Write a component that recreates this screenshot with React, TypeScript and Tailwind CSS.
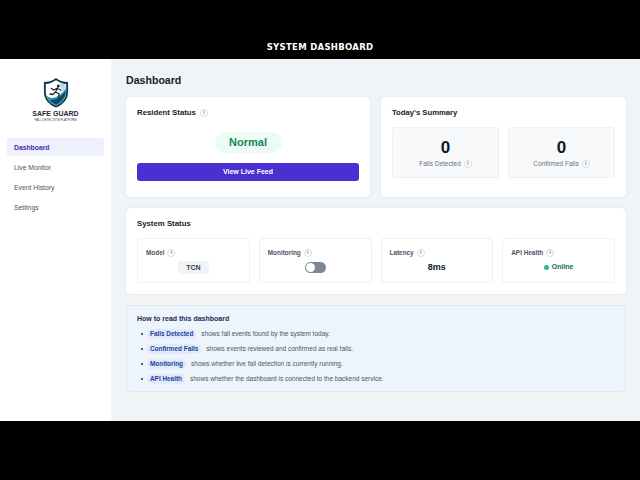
import React from 'react';

const font = "font-['Liberation_Sans',Arial,sans-serif]";

const Info = () => (
  <span className="inline-flex h-[8px] w-[8px] shrink-0 items-center justify-center rounded-full border border-[#d5dbe3] bg-white text-[5px] font-bold leading-none text-[#6b7280]">
    i
  </span>
);

const Logo = () => (
  <svg width="26" height="31" viewBox="0 0 28 31" preserveAspectRatio="none" className="block">
    <path d="M14 1 C18 4 23 5 27 5 L27 15 C27 23 21 28 14 30.5 C7 28 1 23 1 15 L1 5 C5 5 10 4 14 1 Z" fill="#12384f" />
    <path d="M14 3.2 C18 5.6 21.5 6.8 25 7 L25 15 C25 22 20 26.4 14 28.4 C8 26.4 3 22 3 15 L3 7 C6.5 6.8 10 5.6 14 3.2 Z" fill="#ffffff" />
    <path d="M3.4 18 C8 23 17 22 25 11 L25 15 C25 22 20 26.4 14 28.4 C9 26.8 5 23 3.4 18 Z" fill="#2a8fae" />
    <path d="M7 23 C12 24 19 21 24 14 L23.4 18.5 C21 23.5 17.5 26 14 27.2 C11 26.2 9 25 7 23 Z" fill="#0f4560" />
    <path d="M18 6.5 L24.5 7.5 L24.5 12 L20 15 Z" fill="#b7dbe7" />
    <circle cx="16.5" cy="9" r="1.5" fill="#10202e" />
    <path d="M15.5 11 L11.5 13 L9 11.5 M15.5 11 L13.5 15 L17.5 17 L16.5 20 M13.5 15 L10.5 17.5 L7.5 17 M15.5 11.5 L19 13" fill="none" stroke="#10202e" strokeWidth="1.3" strokeLinecap="round" strokeLinejoin="round" />
  </svg>
);

const Sidebar = () => (
  <aside className="flex w-[111px] shrink-0 flex-col bg-white px-[7px] pt-[18px]">
    <div className="flex flex-col items-center">
      <Logo />
      <div className="mt-[2px] text-[7px] font-bold leading-[8px] text-[#1f2937]">SAFE GUARD</div>
      <div className="text-[3px] leading-[4px] text-[#374151]">FALL DETECTION PLATFORM</div>
    </div>
    <nav className="mt-[16px] flex flex-col gap-[2px] text-[6.8px] text-[#4b5563]">
      <div className="flex h-[18px] items-center rounded-[3px] bg-[#eef0fd] px-[7px] pt-[2px] font-bold text-[#3f2fa8]">Dashboard</div>
      <div className="flex h-[18px] items-center px-[7px] pt-[2px]">Live Monitor</div>
      <div className="flex h-[18px] items-center px-[7px] pt-[2px]">Event History</div>
      <div className="flex h-[18px] items-center px-[7px] pt-[2px]">Settings</div>
    </nav>
  </aside>
);

const StatusTile = ({ label, children }: { label: string; children: React.ReactNode }) => (
  <div className="h-[45px] flex-1 rounded-[3px] border border-[#eef1f4] bg-white px-[8px] pt-[9px]">
    <div className="flex items-center gap-[3px] text-[6.4px] font-bold leading-[9px] text-[#4b5563]">
      {label} <Info />
    </div>
    <div className="mt-[4px] flex h-[13px] items-center justify-center">{children}</div>
  </div>
);

const SummaryTile = ({ label }: { label: string }) => (
  <div className="flex h-[51px] flex-1 flex-col items-center rounded-[3px] border border-[#eef1f4] bg-[#f7f9fb] pt-[11px]">
    <div className="text-[17px] font-bold leading-[18px] text-[#111827]">0</div>
    <div className="mt-[2px] flex items-center gap-[3px] text-[6.5px] leading-[9px] text-[#6b7280]">
      {label} <Info />
    </div>
  </div>
);

const helpRows = [
  { term: 'Falls Detected', text: 'shows fall events found by the system today.' },
  { term: 'Confirmed Falls', text: 'shows events reviewed and confirmed as real falls.' },
  { term: 'Monitoring', text: 'shows whether live fall detection is currently running.' },
  { term: 'API Health', text: 'shows whether the dashboard is connected to the backend service.' },
];

const App = () => (
  <div className={`flex h-[480px] w-[640px] flex-col overflow-hidden bg-black ${font}`}>
    <header className="flex h-[59px] shrink-0 items-end justify-center pb-[6px]">
      <h1 className="font-['DejaVu_Sans',sans-serif] text-[8.5px] font-bold leading-[12px] tracking-[0.3px] text-white">SYSTEM DASHBOARD</h1>
    </header>

    <div className="flex h-[362px] shrink-0">
      <Sidebar />
      <main className="flex-1 bg-[#f1f4f6] pl-[15px] pr-[14px] pt-[14px]">
        <h2 className="text-[10.6px] font-bold leading-[14px] text-[#1a202c]">Dashboard</h2>

        <div className="mt-[10px] flex gap-[11px]">
          <section className="h-[100px] w-[244px] rounded-[4px] bg-white px-[11px] pt-[10px] shadow-[0_0_1px_rgba(0,0,0,0.25)]">
            <div className="flex items-center gap-[4px] text-[7.8px] font-bold leading-[11px] text-[#1a202c]">
              Resident Status <Info />
            </div>
            <div className="mt-[14px] flex justify-center">
              <span className="flex h-[21px] w-[67px] items-center justify-center rounded-full bg-[#ecfbf3] text-[11px] font-bold text-[#15875a]">Normal</span>
            </div>
            <button className="mt-[10px] flex h-[18px] w-full items-center justify-center rounded-[3px] bg-[#4a30d0] text-[7px] font-bold text-white">
              View Live Feed
            </button>
          </section>

          <section className="h-[100px] flex-1 rounded-[4px] bg-white px-[11px] pt-[10px] shadow-[0_0_1px_rgba(0,0,0,0.25)]">
            <div className="text-[7.7px] font-bold leading-[11px] text-[#1a202c]">Today's Summary</div>
            <div className="mt-[9px] flex gap-[9px]">
              <SummaryTile label="Falls Detected" />
              <SummaryTile label="Confirmed Falls" />
            </div>
          </section>
        </div>

        <section className="mt-[11px] h-[86px] rounded-[4px] bg-white px-[11px] pt-[10px] shadow-[0_0_1px_rgba(0,0,0,0.25)]">
          <div className="text-[7.8px] font-bold leading-[11px] text-[#1a202c]">System Status</div>
          <div className="mt-[9px] flex gap-[9px]">
            <StatusTile label="Model">
              <span className="rounded-[2px] bg-[#f1f4f6] px-[8px] py-[2px] text-[7px] font-bold leading-[9px] text-[#374151]">TCN</span>
            </StatusTile>
            <StatusTile label="Monitoring">
              <span className="flex h-[11px] w-[21px] items-center rounded-full bg-[#7c8793] pl-[1px]">
                <span className="h-[9px] w-[9px] rounded-full bg-white" />
              </span>
            </StatusTile>
            <StatusTile label="Latency">
              <span className="text-[9px] font-bold text-[#111827]">8ms</span>
            </StatusTile>
            <StatusTile label="API Health">
              <span className="flex items-center gap-[3px] text-[7px] font-bold text-[#166a50]">
                <span className="h-[5px] w-[5px] rounded-full bg-[#22c07a]" />
                Online
              </span>
            </StatusTile>
          </div>
        </section>

        <section className="mt-[11px] h-[87px] rounded-[4px] border border-[#dfe8f3] bg-[#eef4fc] px-[10px] pt-[7px]">
          <div className="text-[7px] font-bold leading-[11px] text-[#1e2a55]">How to read this dashboard</div>
          <ul className="mt-[2px] flex flex-col">
            {helpRows.map((row) => (
              <li key={row.term} className="flex h-[15px] items-center text-[6.5px] text-[#475569]">
                <span className="ml-[4px] h-[2px] w-[2px] rounded-full bg-[#1e2a55]" />
                <span className="ml-[4px] rounded-full bg-[#e0eafb] px-[3px] py-[1px] text-[6.4px] font-bold leading-[8px] text-[#1d3f9e]">{row.term}</span>
                <span className="ml-[5px]">{row.text}</span>
              </li>
            ))}
          </ul>
        </section>
      </main>
    </div>
  </div>
);

export default App;
